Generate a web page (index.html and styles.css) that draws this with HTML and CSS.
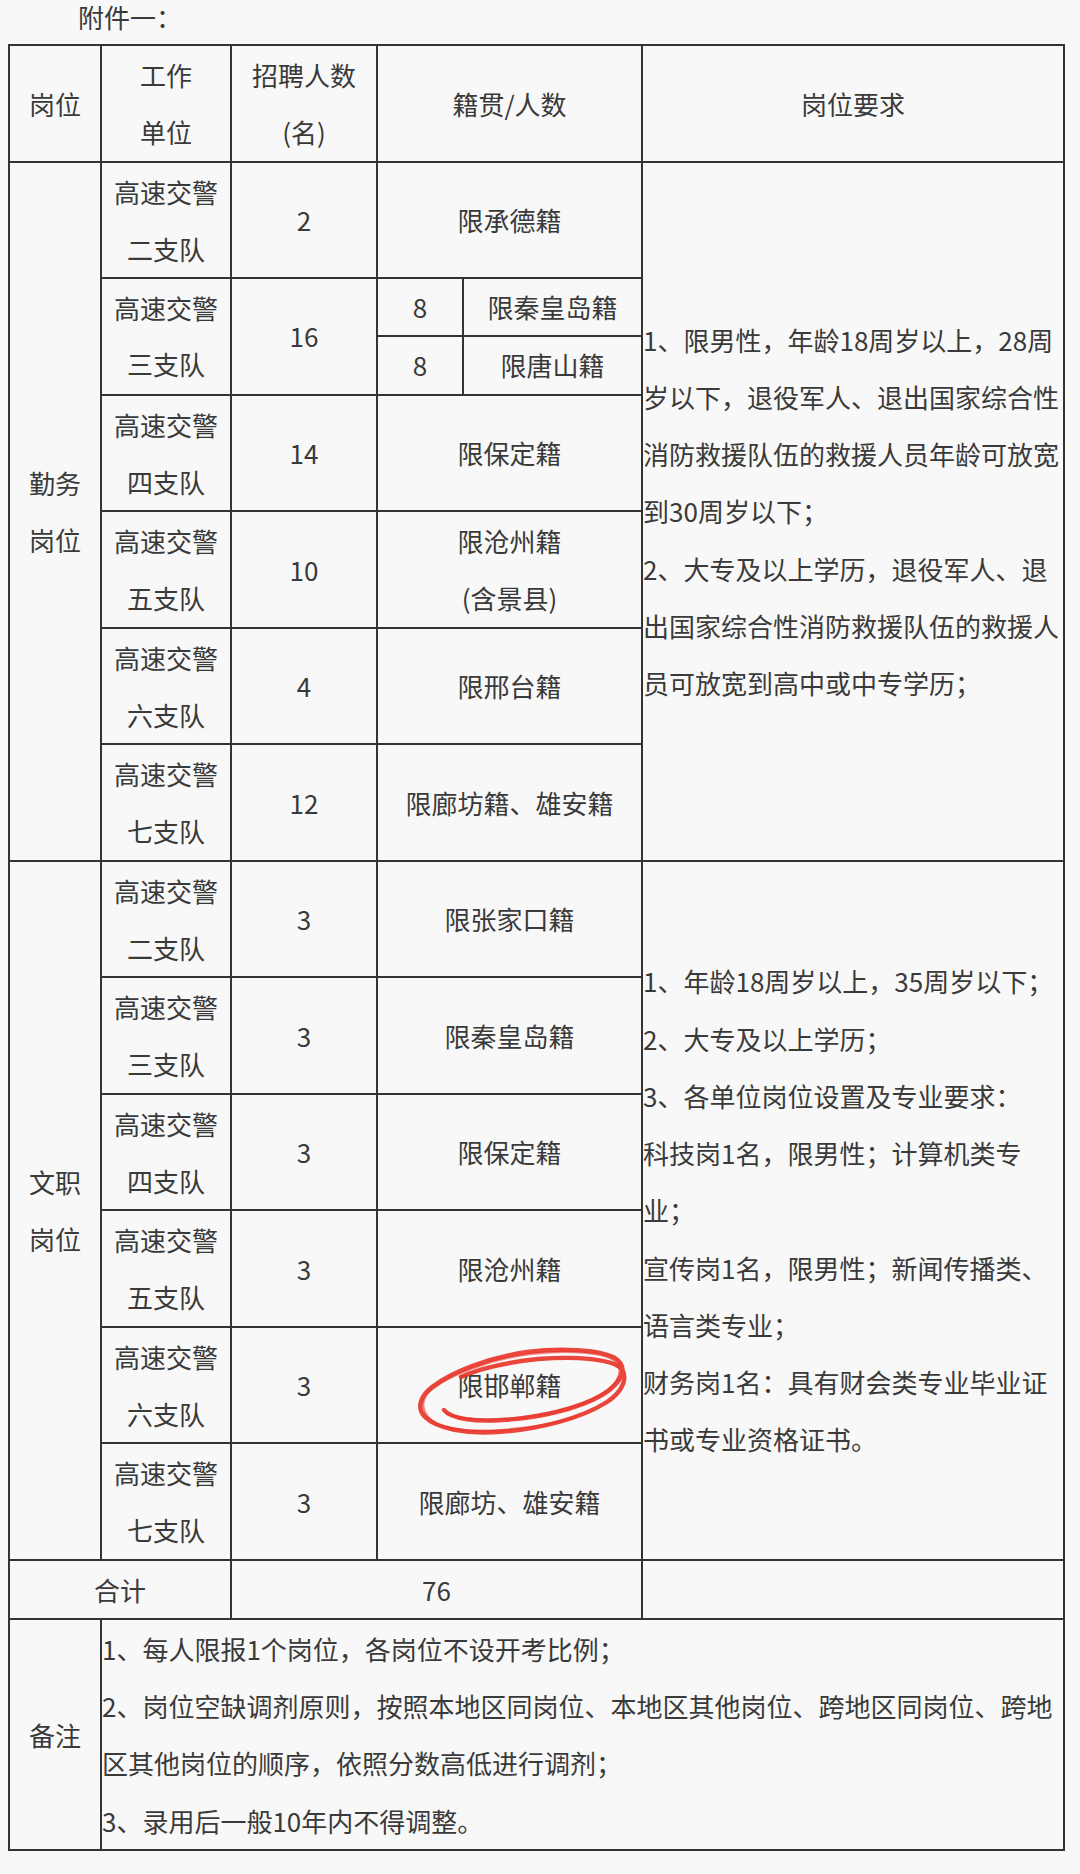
FILE: index.html
```html
<!DOCTYPE html>
<html lang="zh-CN">
<head>
<meta charset="utf-8">
<title>附件一</title>
<link rel="stylesheet" href="styles.css">
</head>
<body>
<p class="title">附件一：</p>
<table class="plan">
  <colgroup>
    <col class="c-type">
    <col class="c-unit">
    <col class="c-num">
    <col class="c-sub">
    <col class="c-origin">
    <col class="c-req">
  </colgroup>
  <thead>
    <tr>
      <th>岗位</th>
      <th>工作<br>单位</th>
      <th>招聘人数<br>(名)</th>
      <th colspan="2">籍贯/人数</th>
      <th>岗位要求</th>
    </tr>
  </thead>
  <tbody>
    <tr>
      <td rowspan="7" class="type">勤务岗位</td>
      <td>高速交警二支队</td>
      <td>2</td>
      <td colspan="2">限承德籍</td>
      <td rowspan="7" class="req">
        <p>1、限男性，年龄18周岁以上，28周岁以下，退役军人、退出国家综合性消防救援队伍的救援人员年龄可放宽到30周岁以下；</p>
        <p>2、大专及以上学历，退役军人、退出国家综合性消防救援队伍的救援人员可放宽到高中或中专学历；</p>
      </td>
    </tr>
    <tr class="half">
      <td rowspan="2">高速交警三支队</td>
      <td rowspan="2">16</td>
      <td>8</td>
      <td>限秦皇岛籍</td>
    </tr>
    <tr class="half">
      <td>8</td>
      <td>限唐山籍</td>
    </tr>
    <tr>
      <td>高速交警四支队</td>
      <td>14</td>
      <td colspan="2">限保定籍</td>
    </tr>
    <tr>
      <td>高速交警五支队</td>
      <td>10</td>
      <td colspan="2">限沧州籍<br>(含景县)</td>
    </tr>
    <tr>
      <td>高速交警六支队</td>
      <td>4</td>
      <td colspan="2">限邢台籍</td>
    </tr>
    <tr>
      <td>高速交警七支队</td>
      <td>12</td>
      <td colspan="2">限廊坊籍、雄安籍</td>
    </tr>
    <tr>
      <td rowspan="6" class="type">文职岗位</td>
      <td>高速交警二支队</td>
      <td>3</td>
      <td colspan="2">限张家口籍</td>
      <td rowspan="6" class="req">
        <p>1、年龄18周岁以上，35周岁以下；</p>
        <p>2、大专及以上学历；</p>
        <p>3、各单位岗位设置及专业要求：</p>
        <p>科技岗1名，限男性；计算机类专业；</p>
        <p>宣传岗1名，限男性；新闻传播类、语言类专业；</p>
        <p>财务岗1名：具有财会类专业毕业证书或专业资格证书。</p>
      </td>
    </tr>
    <tr>
      <td>高速交警三支队</td>
      <td>3</td>
      <td colspan="2">限秦皇岛籍</td>
    </tr>
    <tr>
      <td>高速交警四支队</td>
      <td>3</td>
      <td colspan="2">限保定籍</td>
    </tr>
    <tr>
      <td>高速交警五支队</td>
      <td>3</td>
      <td colspan="2">限沧州籍</td>
    </tr>
    <tr>
      <td>高速交警六支队</td>
      <td>3</td>
      <td colspan="2" class="marked">限邯郸籍<svg class="ring" viewBox="0 0 210 90" aria-hidden="true"><path d="M28,63 C35,72 60,75 86,73 C122,71 162,62 186,48 C206,36 213,20 199,11 C183,2 142,1 111,5 C71,11 36,25 16,40 C3,50 1,62 9,70 C21,82 51,87 81,85 C122,83 166,71 191,55 C206,45 212,32 206,22 C196,12 162,9 122,12 C92,15 62,22 45,30"/><path class="thin" d="M30,66 C50,76 110,74 150,62 C185,52 210,35 202,17 C192,4 150,3 115,7 C75,12 30,28 12,46 C2,58 8,74 30,80 C60,88 120,82 160,70"/></svg></td>
    </tr>
    <tr>
      <td>高速交警七支队</td>
      <td>3</td>
      <td colspan="2">限廊坊、雄安籍</td>
    </tr>
    <tr class="total">
      <td colspan="2">合计</td>
      <td colspan="3">76</td>
      <td></td>
    </tr>
    <tr>
      <td class="type">备注</td>
      <td colspan="5" class="notes">
        <p>1、每人限报1个岗位，各岗位不设开考比例；</p>
        <p>2、岗位空缺调剂原则，按照本地区同岗位、本地区其他岗位、跨地区同岗位、跨地区其他岗位的顺序，依照分数高低进行调剂；</p>
        <p>3、录用后一般10年内不得调整。</p>
      </td>
    </tr>
  </tbody>
</table>
</body>
</html>
```

FILE: styles.css
```css
html, body {
  margin: 0;
  padding: 0;
  background: #f8f8f8;
}

body {
  font-family: "Noto Sans CJK SC", "Microsoft YaHei", sans-serif;
  font-size: 26px;
  color: #3a3a3a;
}

.title {
  margin: 0 0 10px 0;
  padding-left: 78px;
  line-height: 34px;
}

.plan {
  margin-left: 8px;
  width: 1055px;
  table-layout: fixed;
  border-collapse: collapse;
  border: 2px solid #222222;
}

.c-type { width: 92px; }
.c-unit { width: 130px; }
.c-num { width: 146px; }
.c-sub { width: 86px; }
.c-origin { width: 179px; }
.c-req { width: 422px; }

.plan th,
.plan td {
  border: 2px solid #333333;
  padding: 0 8px;
  text-align: center;
  vertical-align: middle;
  line-height: 57.25px;
  font-weight: 400;
}

.plan .half td {
  line-height: 56.25px;
}

.plan td.req,
.plan td.notes {
  text-align: left;
  padding: 0;
}

.req p,
.notes p {
  margin: 0;
}

.plan td.marked {
  position: relative;
}

.ring {
  position: absolute;
  left: 38px;
  top: 19px;
  width: 210px;
  height: 90px;
  overflow: visible;
  pointer-events: none;
}

.ring path {
  fill: none;
  stroke: #e8362b;
  stroke-width: 4.4;
  stroke-linecap: round;
  stroke-linejoin: round;
  opacity: 0.92;
}

.ring path.thin {
  stroke-width: 2.2;
  opacity: 0.6;
}
```
